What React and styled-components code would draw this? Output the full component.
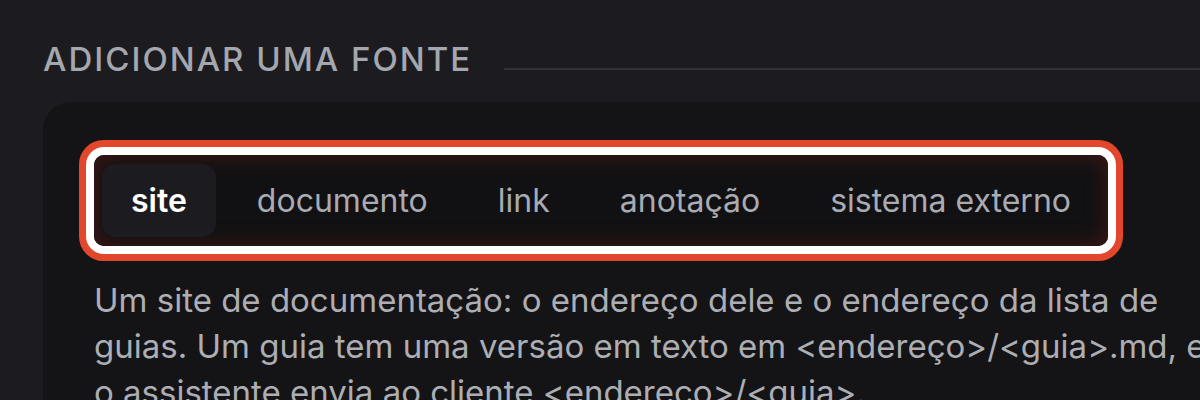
import React, { useState } from 'react';
import styled, { createGlobalStyle } from 'styled-components';

const GlobalStyle = createGlobalStyle`
  body {
    margin: 0;
    background: #1c1c20;
    font-family: Inter, "Noto Sans", sans-serif;
    -webkit-font-smoothing: antialiased;
  }
`;

const Page = styled.div`
  padding: 39px 0 0 43px;
  overflow: hidden;
`;

const SectionHeader = styled.div`
  display: flex;
  align-items: center;
  gap: 32px;
`;

const Title = styled.h2`
  margin: 0;
  font-size: 33px;
  font-weight: 500;
  line-height: 40px;
  letter-spacing: 2px;
  text-transform: uppercase;
  color: #a4a7ae;
  white-space: nowrap;
`;

const Rule = styled.div`
  flex: 1;
  height: 2px;
  margin-top: 20px;
  background: #303136;
`;

// the card runs on past the right edge of the window
const Card = styled.section`
  margin: 23px -200px 0 0;
  min-height: 400px;
  padding: 53px 0 0 51px;
  background: #141416;
  border-top-left-radius: 28px;
`;

const TabList = styled.div`
  display: inline-flex;
  gap: 12px;
  padding: 9px 8px;
  border-radius: 10px;
  background: #111113;
  box-shadow:
    inset 0 0 0 1px #2a1614,
    inset 0 0 22px rgba(170, 40, 25, 0.35),
    0 0 0 8px #ffffff,
    0 0 0 15px #e2472d;
`;

const Tab = styled.button`
  height: 73px;
  padding: 0 29px;
  border: none;
  border-radius: 14px;
  font-family: inherit;
  font-size: 32px;
  font-weight: ${({ $active }) => ($active ? 600 : 400)};
  color: ${({ $active }) => ($active ? '#ffffff' : '#a9abb2')};
  background: ${({ $active }) => ($active ? '#1c1c20' : 'transparent')};
  cursor: pointer;
`;

const Description = styled.p`
  margin: 31px 0 0;
  max-width: 1125px;
  font-size: 33px;
  line-height: 46px;
  color: #acaeb4;
`;

const tabs = ['site', 'documento', 'link', 'anotação', 'sistema externo'];

const App = () => {
  const [active, setActive] = useState('site');

  return (
    <Page>
      <GlobalStyle />
      <SectionHeader>
        <Title>Adicionar uma fonte</Title>
        <Rule />
      </SectionHeader>
      <Card>
        <TabList>
          {tabs.map(tab => (
            <Tab key={tab} $active={tab === active} onClick={() => setActive(tab)}>
              {tab}
            </Tab>
          ))}
        </TabList>
        <Description>
          Um site de documentação: o endereço dele e o endereço da lista de
          guias. Um guia tem uma versão em texto em &lt;endereço&gt;/&lt;guia&gt;.md, e
          o assistente envia ao cliente &lt;endereço&gt;/&lt;guia&gt;.
        </Description>
      </Card>
    </Page>
  );
};

export default App;
